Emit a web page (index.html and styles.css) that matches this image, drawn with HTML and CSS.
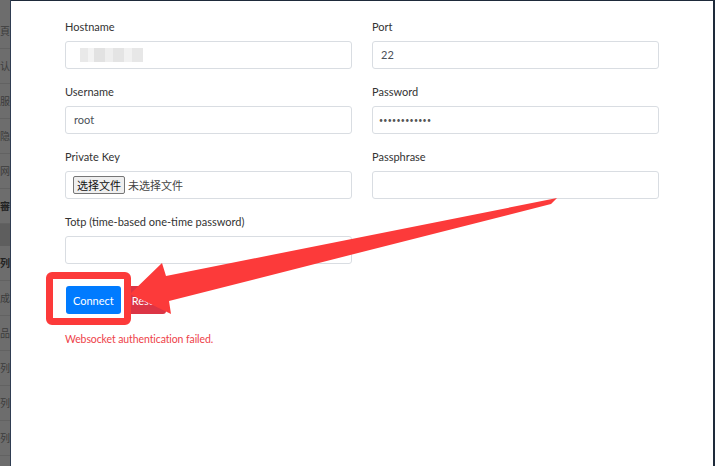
FILE: index.html
```html
<!DOCTYPE html>
<html lang="en">
  <head>
    <meta charset="UTF-8" />
    <meta name="viewport" content="width=device-width, initial-scale=1.0" />
    <title>SSH Login</title>
    <link rel="stylesheet" href="styles.css">
  </head>
  <body>
    <div class="screen">
      <aside class="peek">
        <div class="peek-row">頁</div>
        <div class="peek-row">认</div>
        <div class="peek-row">服</div>
        <div class="peek-row">隐</div>
        <div class="peek-row">网</div>
        <div class="peek-row bold">審</div>
        <div class="peek-band"></div>
        <div class="peek-row bold">列</div>
        <div class="peek-row">成</div>
        <div class="peek-row">品</div>
        <div class="peek-row">列</div>
        <div class="peek-row">列</div>
        <div class="peek-row">列</div>
      </aside>
      <main class="modal">
        <form class="form">
          <div class="grid">
            <div class="group">
              <label>Hostname</label>
              <div class="field"><span class="blurred"></span></div>
            </div>
            <div class="group">
              <label>Port</label>
              <div class="field">22</div>
            </div>
            <div class="group">
              <label>Username</label>
              <div class="field">root</div>
            </div>
            <div class="group">
              <label>Password</label>
              <div class="field dots">••••••••••••</div>
            </div>
            <div class="group">
              <label>Private Key</label>
              <div class="field file">
                <span class="file-btn">选择文件</span>
                <span class="file-name">未选择文件</span>
              </div>
            </div>
            <div class="group">
              <label>Passphrase</label>
              <div class="field"></div>
            </div>
            <div class="group">
              <label>Totp (time-based one-time password)</label>
              <div class="field"></div>
            </div>
          </div>
          <div class="actions">
            <button type="button" class="btn btn-primary">Connect</button>
            <button type="button" class="btn btn-danger">Reset</button>
          </div>
          <p class="error">Websocket authentication failed.</p>
        </form>
      </main>
    </div>

    <div class="mark-box"></div>
    <svg class="arrow" width="715" height="466" viewBox="0 0 715 466">
      <polygon points="557,198 166,276 162,263 130,294 171,314 169,301 551,204" fill="#fc3a3a" />
    </svg>
  </body>
</html>
```

FILE: styles.css
```css
* {
  margin: 0;
  padding: 0;
  box-sizing: border-box;
}
body {
  font-family: Lato, "Noto Sans CJK SC", sans-serif;
  background-color: #1e2a3a;
  overflow: hidden;
}
.screen {
  height: 466px;
  display: flex;
  padding-right: 2px;
}
.peek {
  width: 11px;
  background-color: #6d6d6d;
  border-right: 1px solid #2f3d52;
  overflow: hidden;
  display: flex;
  flex-direction: column;
  padding-top: 14px;
}
.peek-row {
  height: 35px;
  border-bottom: 1px solid #626262;
  font-family: "Noto Sans CJK SC", sans-serif;
  font-size: 10px;
  line-height: 34px;
  color: #3c3c3c;
  white-space: nowrap;
}
.peek-row.bold {
  font-weight: bold;
  color: #222;
}
.peek-band {
  height: 22px;
  background-color: #5e5e5e;
}
.modal {
  flex: 1;
  background-color: #fff;
  border-top: 1px solid #1e2a3a;
  padding: 18px 54px 0 54px;
}
.grid {
  display: grid;
  grid-template-columns: 287px 287px;
  column-gap: 20px;
}
.group {
  margin-bottom: 15px;
}
.group label {
  display: block;
  font-size: 11px;
  line-height: 16px;
  color: #333;
  margin-bottom: 6px;
}
.field {
  height: 28px;
  border: 1px solid #d9dde2;
  border-radius: 3px;
  padding: 0 8px;
  font-size: 11px;
  line-height: 26px;
  color: #4a5057;
  display: flex;
  align-items: center;
}
.dots {
  font-size: 7px;
  letter-spacing: 0.3px;
  padding-left: 6px;
  color: #555;
}
.blurred {
  display: block;
  width: 63px;
  height: 14px;
  margin-left: 6px;
  background:
    linear-gradient(90deg, #e9e9e9 0 12%, #f3f3f3 12% 22%, #e2e2e2 22% 40%, #eeeeee 40% 52%, #e4e4e4 52% 70%, #f1f1f1 70% 82%, #e7e7e7 82% 100%);
}
.file {
  padding: 0 7px;
  gap: 3px;
}
.file-btn {
  font-family: "Noto Sans CJK SC", sans-serif;
  font-size: 11px;
  line-height: 16px;
  padding: 0 3px;
  background-color: #efefef;
  border: 1px solid #767676;
  border-radius: 2px;
  color: #111;
}
.file-name {
  font-family: "Noto Sans CJK SC", sans-serif;
  font-size: 11px;
  color: #444;
}
.actions {
  display: flex;
  gap: 4px;
  margin-top: 7px;
  padding-left: 1px;
}
.btn {
  height: 28px;
  border: none;
  border-radius: 3px;
  padding: 0 7px;
  font-family: Lato, sans-serif;
  font-size: 11px;
  color: #fff;
}
.btn-primary {
  background-color: #007bff;
}
.btn-danger {
  background-color: #dc3545;
}
.error {
  margin-top: 19px;
  font-size: 10.5px;
  letter-spacing: -0.1px;
  color: #ee4249;
}
.mark-box {
  position: absolute;
  left: 46px;
  top: 272px;
  width: 85px;
  height: 53px;
  border: 7px solid #fc3a3a;
  border-radius: 6px;
}
.arrow {
  position: absolute;
  left: 0;
  top: 0;
}
```
